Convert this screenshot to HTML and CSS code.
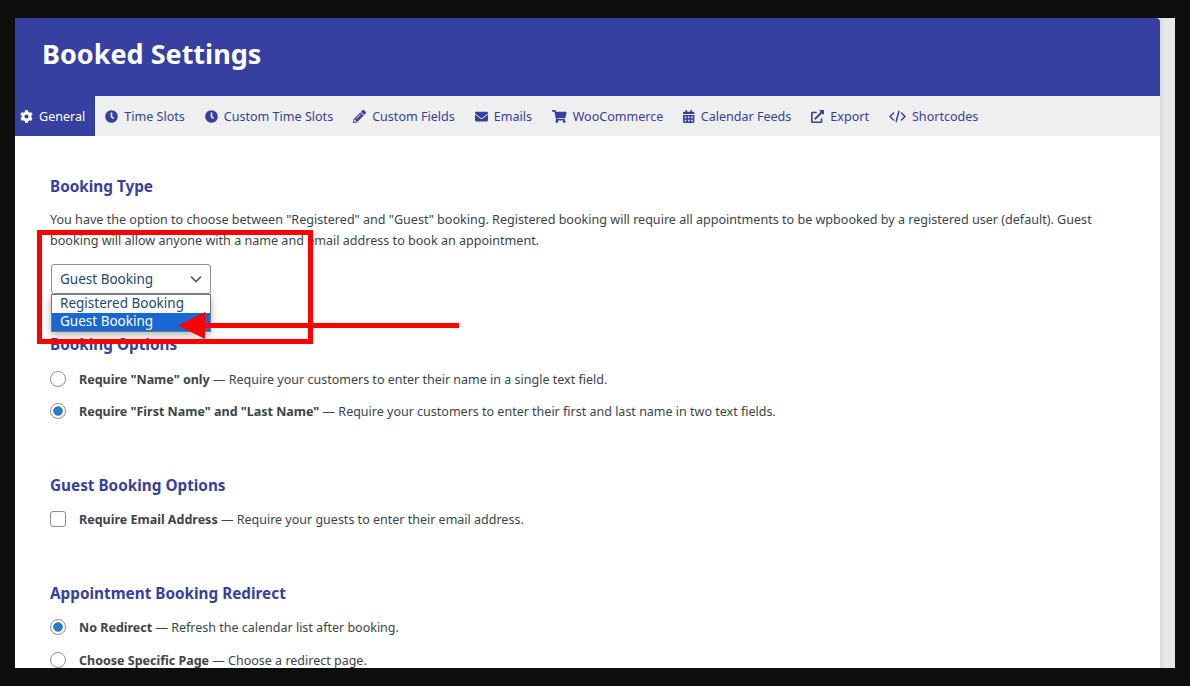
FILE: index.html
```html
<!DOCTYPE html>
<html lang="en">

<head>
    <meta charset="UTF-8">
    <title>Booked Settings</title>
    <link rel="stylesheet" href="styles.css">
</head>

<body>
    <div class="screen">
        <div class="panel">
            <div class="panel-header">
                <h1>Booked Settings</h1>
            </div>

            <div class="tabs">
                <a class="tab active"><svg class="icon" viewBox="0 0 512 512"><path d="M487.4 315.7l-42.6-24.6c4.3-23.2 4.3-47 0-70.2l42.6-24.6c4.9-2.8 7.1-8.6 5.5-14-11.1-35.6-30-67.8-54.7-94.6-3.8-4.1-10-5.1-14.8-2.3L380.8 110c-17.9-15.4-38.5-27.3-60.8-35.1V25.8c0-5.6-3.9-10.5-9.4-11.7-36.7-8.2-74.3-7.8-109.2 0-5.5 1.2-9.4 6.1-9.4 11.7V75c-22.2 7.9-42.8 19.8-60.8 35.1L88.7 85.5c-4.9-2.8-11-1.9-14.8 2.3-24.7 26.7-43.6 58.9-54.7 94.6-1.7 5.4.6 11.2 5.5 14L67.3 221c-4.3 23.2-4.3 47 0 70.2l-42.6 24.6c-4.9 2.8-7.1 8.6-5.5 14 11.1 35.6 30 67.8 54.7 94.6 3.8 4.1 10 5.1 14.8 2.3l42.6-24.6c17.9 15.4 38.5 27.3 60.8 35.1v49.2c0 5.6 3.9 10.5 9.4 11.7 36.7 8.2 74.3 7.8 109.2 0 5.5-1.2 9.4-6.1 9.4-11.7v-49.2c22.2-7.9 42.8-19.8 60.8-35.1l42.6 24.6c4.9 2.8 11 1.9 14.8-2.3 24.7-26.7 43.6-58.9 54.7-94.6 1.5-5.5-.7-11.3-5.6-14.1zM256 336c-44.1 0-80-35.9-80-80s35.9-80 80-80 80 35.9 80 80-35.9 80-80 80z"/></svg>General</a>
                <a class="tab"><svg class="icon" viewBox="0 0 512 512"><path d="M256,8C119,8,8,119,8,256S119,504,256,504,504,393,504,256,393,8,256,8Zm92.49,313h0l-20,25a16,16,0,0,1-22.49,2.5h0l-67-49.72a40,40,0,0,1-15-31.23V112a16,16,0,0,1,16-16h32a16,16,0,0,1,16,16V256l58,42.5A16,16,0,0,1,348.49,321Z"/></svg>Time Slots</a>
                <a class="tab"><svg class="icon" viewBox="0 0 512 512"><path d="M256,8C119,8,8,119,8,256S119,504,256,504,504,393,504,256,393,8,256,8Zm92.49,313h0l-20,25a16,16,0,0,1-22.49,2.5h0l-67-49.72a40,40,0,0,1-15-31.23V112a16,16,0,0,1,16-16h32a16,16,0,0,1,16,16V256l58,42.5A16,16,0,0,1,348.49,321Z"/></svg>Custom Time Slots</a>
                <a class="tab"><svg class="icon" viewBox="0 0 512 512"><path d="M497.9 142.1l-46.1 46.1c-4.7 4.7-12.3 4.7-17 0l-111-111c-4.7-4.7-4.7-12.3 0-17l46.1-46.1c18.7-18.7 49.1-18.7 67.9 0l60.1 60.1c18.8 18.7 18.8 49.1 0 67.9zM284.2 99.8L21.6 362.4.4 483.9c-2.9 16.4 11.4 30.6 27.8 27.8l121.5-21.3 262.6-262.6c4.7-4.7 4.7-12.3 0-17l-111-111c-4.8-4.7-12.4-4.7-17.1 0zM124.1 339.9c-5.5-5.5-5.5-14.3 0-19.8l154-154c5.5-5.5 14.3-5.5 19.8 0s5.5 14.3 0 19.8l-154 154c-5.5 5.5-14.3 5.5-19.8 0zM88 424h48v36.3l-64.5 11.3-31.1-31.1L51.7 376H88v48z"/></svg>Custom Fields</a>
                <a class="tab"><svg class="icon" viewBox="0 0 512 512"><path d="M502.3 190.8c3.9-3.1 9.7-.2 9.7 4.7V400c0 26.5-21.5 48-48 48H48c-26.5 0-48-21.5-48-48V195.6c0-5 5.7-7.8 9.7-4.7 22.4 17.4 52.1 39.5 154.1 113.6 21.1 15.4 56.7 47.8 92.2 47.6 35.7.3 72-32.8 92.3-47.6 102-74.1 131.6-96.3 154-113.7zM256 320c23.2.4 56.6-29.2 73.4-41.4 132.7-96.3 142.8-104.7 173.4-128.7 5.8-4.5 9.2-11.5 9.2-18.9v-19c0-26.5-21.5-48-48-48H48C21.5 64 0 85.5 0 112v19c0 7.4 3.4 14.3 9.2 18.9 30.6 23.9 40.7 32.4 173.4 128.7 16.8 12.2 50.2 41.8 73.4 41.4z"/></svg>Emails</a>
                <a class="tab"><svg class="icon" viewBox="0 0 576 512"><path d="M528.12 301.319l47.273-208C578.806 78.301 567.391 64 551.99 64H159.208l-9.166-44.81C147.758 8.021 137.93 0 126.529 0H24C10.745 0 0 10.745 0 24v16c0 13.255 10.745 24 24 24h69.883l70.248 343.435C147.325 417.1 136 435.222 136 456c0 30.928 25.072 56 56 56s56-25.072 56-56c0-15.674-6.447-29.835-16.824-40h209.647C430.447 426.165 424 440.326 424 456c0 30.928 25.072 56 56 56s56-25.072 56-56c0-22.172-12.888-41.332-31.579-50.405l5.517-24.276c3.413-15.018-8.002-29.319-23.403-29.319H218.117l-6.545-32h293.145c11.206 0 20.92-7.754 23.403-18.681z"/></svg>WooCommerce</a>
                <a class="tab"><svg class="icon" viewBox="0 0 448 512"><path d="M0 464c0 26.5 21.5 48 48 48h352c26.5 0 48-21.5 48-48V192H0v272zm320-196c0-6.6 5.4-12 12-12h40c6.6 0 12 5.4 12 12v40c0 6.6-5.4 12-12 12h-40c-6.6 0-12-5.4-12-12v-40zm0 128c0-6.6 5.4-12 12-12h40c6.6 0 12 5.4 12 12v40c0 6.6-5.4 12-12 12h-40c-6.6 0-12-5.4-12-12v-40zM192 268c0-6.6 5.4-12 12-12h40c6.6 0 12 5.4 12 12v40c0 6.6-5.4 12-12 12h-40c-6.6 0-12-5.4-12-12v-40zm0 128c0-6.6 5.4-12 12-12h40c6.6 0 12 5.4 12 12v40c0 6.6-5.4 12-12 12h-40c-6.6 0-12-5.4-12-12v-40zM64 268c0-6.6 5.4-12 12-12h40c6.6 0 12 5.4 12 12v40c0 6.6-5.4 12-12 12H76c-6.6 0-12-5.4-12-12v-40zm0 128c0-6.6 5.4-12 12-12h40c6.6 0 12 5.4 12 12v40c0 6.6-5.4 12-12 12H76c-6.6 0-12-5.4-12-12v-40zM400 64h-48V16c0-8.8-7.2-16-16-16h-32c-8.8 0-16 7.2-16 16v48H160V16c0-8.8-7.2-16-16-16h-32c-8.8 0-16 7.2-16 16v48H48C21.5 64 0 85.5 0 112v48h448v-48c0-26.5-21.5-48-48-48z"/></svg>Calendar Feeds</a>
                <a class="tab"><svg class="icon" viewBox="0 0 512 512"><path d="M432,320H400a16,16,0,0,0-16,16V448H64V128H208a16,16,0,0,0,16-16V80a16,16,0,0,0-16-16H48A48,48,0,0,0,0,112V464a48,48,0,0,0,48,48H400a48,48,0,0,0,48-48V336A16,16,0,0,0,432,320ZM488,0h-128c-21.37,0-32.05,25.91-17,41l35.73,35.73L135,320.37a24,24,0,0,0,0,34L157.67,377a24,24,0,0,0,34,0L435.28,133.32,471,169c15,15,41,4.5,41-17V24A24,24,0,0,0,488,0Z"/></svg>Export</a>
                <a class="tab"><svg class="icon icon-code" viewBox="0 0 17 13"><path d="M5 2.5L1 6.5l4 4M12 2.5l4 4-4 4M10 .8L7 12.2"/></svg>Shortcodes</a>
            </div>

            <div class="content">
                <section class="section-type">
                    <h3>Booking Type</h3>
                    <p class="intro">You have the option to choose between "Registered" and "Guest" booking. Registered booking will require all appointments to be wpbooked by a registered user (default). Guest<br>booking will allow anyone with a name and email address to book an appointment.</p>
                    <div class="select">
                        <span>Guest Booking</span>
                        <svg class="chevron" viewBox="0 0 12 8"><path d="M1 1.5l5 5 5-5"/></svg>
                        <div class="select-menu">
                            <div class="select-option">Registered Booking</div>
                            <div class="select-option selected">Guest Booking</div>
                        </div>
                    </div>
                </section>

                <section class="section-options">
                    <h3>Booking Options</h3>
                    <div class="option"><span class="radio"></span><span><b>Require "Name" only</b> — Require your customers to enter their name in a single text field.</span></div>
                    <div class="option"><span class="radio checked"></span><span><b>Require "First Name" and "Last Name"</b> — Require your customers to enter their first and last name in two text fields.</span></div>
                </section>

                <section class="section-guest">
                    <h3>Guest Booking Options</h3>
                    <div class="option"><span class="checkbox"></span><span><b>Require Email Address</b> — Require your guests to enter their email address.</span></div>
                </section>

                <section class="section-redirect">
                    <h3>Appointment Booking Redirect</h3>
                    <div class="option"><span class="radio checked"></span><span><b>No Redirect</b> — Refresh the calendar list after booking.</span></div>
                    <div class="option"><span class="radio"></span><span><b>Choose Specific Page</b> — Choose a redirect page.</span></div>
                </section>
            </div>
        </div>
        <div class="scroll-strip"></div>

        <!-- red markup drawn on top of the screenshot -->
        <svg class="markup" viewBox="0 0 1160 650">
            <rect x="24.5" y="214.5" width="271" height="109" fill="none" stroke="#fe0000" stroke-width="5"/>
            <path d="M444 305H190V294L163 307.5 190 321V310H444z" fill="#fe0000"/>
        </svg>
    </div>
</body>

</html>
```

FILE: styles.css
```css
html,
body {
    height: 100%;
}

body {
    margin: 0;
    background-color: #0e0e0e;
    font-family: "Noto Sans", sans-serif;
    font-size: 12.5px;
    color: #3c434a;
    overflow: hidden;
}

.screen {
    position: relative;
    display: flex;
    width: 1160px;
    height: 650px;
    margin: 18px 15px;
    overflow: hidden;
}

.panel {
    display: flex;
    flex-direction: column;
    flex: 1;
    min-width: 0;
    background-color: #fff;
}

.scroll-strip {
    width: 15px;
    background: linear-gradient(to right, #dadada, #e8e8e8 5px);
}

.panel-header {
    flex: none;
    box-sizing: border-box;
    height: 78px;
    display: flex;
    align-items: center;
    padding: 0 0 8px 27px;
    background-color: #3640a0;
    border-top-right-radius: 4px;
}

.panel-header h1 {
    margin: 0;
    font-size: 27px;
    font-weight: 700;
    color: #fff;
}

.tabs {
    flex: none;
    height: 40px;
    display: flex;
    background-color: #efefef;
    font-size: 12.55px;
}

.tab {
    display: flex;
    align-items: center;
    padding: 0 10px;
    color: #3640a0;
    white-space: nowrap;
}

.tab:first-child {
    padding-left: 5px;
}

.tab.active {
    background-color: #3640a0;
    color: #fff;
}

.icon {
    height: 13px;
    margin-right: 6px;
    fill: currentColor;
}

.icon-code {
    fill: none;
    stroke: currentColor;
    stroke-width: 1.5;
}

.content {
    flex: 1;
    padding: 0 35px;
}

h3 {
    margin: 0;
    font-size: 15.3px;
    line-height: 22px;
    font-weight: 700;
    color: #3640a0;
}

.section-type {
    padding-top: 39px;
}

.intro {
    margin: 12px 0 0;
    font-size: 12.57px;
    line-height: 21px;
    white-space: nowrap;
}

.select {
    position: relative;
    display: flex;
    align-items: center;
    justify-content: space-between;
    box-sizing: border-box;
    width: 160px;
    height: 30px;
    margin: 13px 0 0 1px;
    padding: 0 8px;
    border: 1px solid #8c8f94;
    border-radius: 3px;
    background-color: #fff;
    font-size: 13.5px;
    color: #1a4a72;
}

.chevron {
    width: 12px;
    height: 8px;
    fill: none;
    stroke: #50575e;
    stroke-width: 1.6;
}

.select-menu {
    position: absolute;
    top: 29px;
    left: -1px;
    box-sizing: border-box;
    width: 160px;
    height: 38px;
    border: 1px solid #767676;
    background-color: #fff;
    box-shadow: 0 3px 8px rgba(0, 0, 0, 0.3);
}

.select-option {
    height: 18px;
    padding-left: 8px;
    line-height: 16px;
}

.select-option.selected {
    background-color: #1967d2;
    color: #fff;
}

.section-options {
    padding-top: 39px;
}

.section-guest {
    padding-top: 52px;
}

.section-redirect {
    padding-top: 52px;
}

.option {
    display: flex;
    align-items: center;
    height: 22px;
    margin-top: 12px;
}

.section-options h3 + .option {
    margin-top: 13px;
}

.option + .option {
    margin-top: 10px;
}

.section-redirect .option + .option {
    margin-top: 11px;
}

.radio,
.checkbox {
    box-sizing: border-box;
    width: 16px;
    height: 16px;
    flex: none;
    margin-right: 13px;
    border: 1px solid #8c8f94;
    background-color: #fff;
}

.radio {
    border-radius: 50%;
}

.radio.checked {
    background: radial-gradient(circle, #2b7cc4 0, #2b7cc4 4.4px, #fff 5px);
}

.checkbox {
    border-radius: 3px;
}

.markup {
    position: absolute;
    top: 0;
    left: 0;
    width: 1160px;
    height: 650px;
    pointer-events: none;
}
```
